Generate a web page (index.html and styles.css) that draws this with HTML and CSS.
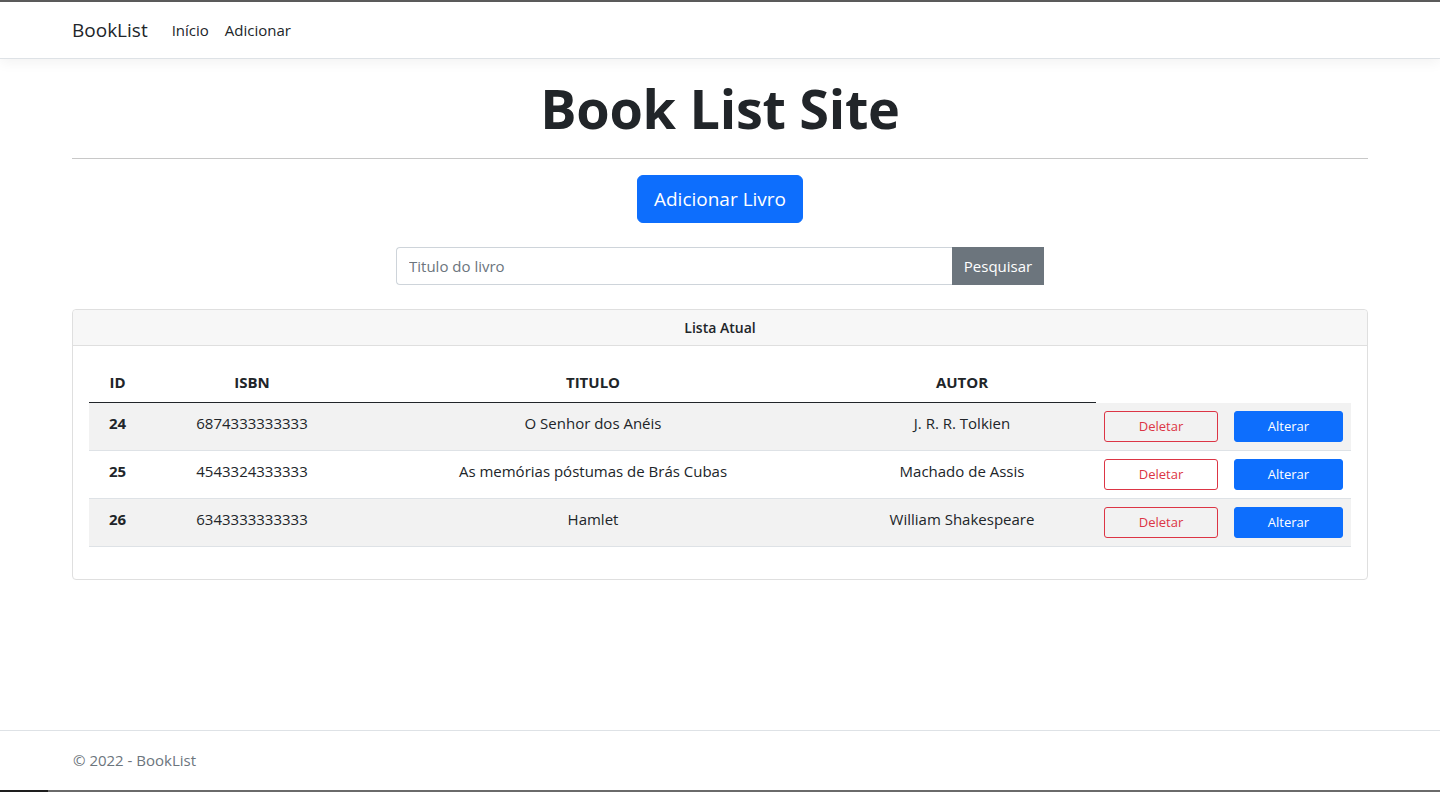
FILE: index.html
```html
<!DOCTYPE html>
<html lang="pt-br">
<head>
<meta charset="utf-8">
<title>BookList</title>
<link rel="stylesheet" href="styles.css">
</head>
<body>
<div class="frame-top"></div>
<header class="navbar">
  <div class="container nav-inner">
    <a class="brand" href="#">BookList</a>
    <nav class="nav-links">
      <a class="nav-link" href="#">Início</a>
      <a class="nav-link" href="#">Adicionar</a>
    </nav>
  </div>
</header>
<main class="container main">
  <h1 class="title">Book List Site</h1>
  <hr class="divider">
  <div class="actions">
    <a class="btn btn-primary btn-lg" href="#">Adicionar Livro</a>
  </div>
  <form class="search">
    <input class="search-input" type="text" placeholder="Titulo do livro">
    <button class="btn btn-secondary search-btn" type="button">Pesquisar</button>
  </form>
  <section class="card">
    <div class="card-header">Lista Atual</div>
    <div class="card-body">
      <table class="table">
        <colgroup>
          <col class="c-id"><col class="c-isbn"><col class="c-title"><col class="c-author"><col class="c-del"><col class="c-alt">
        </colgroup>
        <thead>
          <tr><th>ID</th><th>ISBN</th><th>TITULO</th><th>AUTOR</th></tr>
        </thead>
        <tbody>
          <tr class="odd">
            <th>24</th><td>6874333333333</td><td>O Senhor dos Anéis</td><td>J. R. R. Tolkien</td>
            <td><a class="btn btn-sm btn-outline-danger" href="#">Deletar</a></td>
            <td><a class="btn btn-sm btn-primary" href="#">Alterar</a></td>
          </tr>
          <tr>
            <th>25</th><td>4543324333333</td><td>As memórias póstumas de Brás Cubas</td><td>Machado de Assis</td>
            <td><a class="btn btn-sm btn-outline-danger" href="#">Deletar</a></td>
            <td><a class="btn btn-sm btn-primary" href="#">Alterar</a></td>
          </tr>
          <tr class="odd">
            <th>26</th><td>6343333333333</td><td>Hamlet</td><td>William Shakespeare</td>
            <td><a class="btn btn-sm btn-outline-danger" href="#">Deletar</a></td>
            <td><a class="btn btn-sm btn-primary" href="#">Alterar</a></td>
          </tr>
        </tbody>
      </table>
    </div>
  </section>
</main>
<footer class="footer">
  <div class="container">© 2022 - BookList</div>
</footer>
<div class="frame-bottom"></div>
</body>
</html>
```
FILE: styles.css
```css
* { box-sizing: border-box; }
html, body { margin: 0; padding: 0; }
body {
  font-family: "Open Sans", "Noto Sans", sans-serif;
  font-size: 16px;
  line-height: 1.5;
  color: #212529;
  background: #fff;
  height: 792px;
  display: flex;
  flex-direction: column;
  overflow: hidden;
}
a { text-decoration: none; }
.frame-top { height: 2px; background: #5c5c5c; flex: none; }
.frame-bottom { height: 2px; flex: none; background: linear-gradient(to right, #1e1e1e 48px, #6a6a6a 48px); }
.container { width: 1296px; margin: 0 auto; }

.navbar {
  flex: none;
  background: #fff;
  border-bottom: 1px solid #dee2e6;
  box-shadow: 0 4px 12px rgba(0,0,0,.05);
  padding: 8px 0;
  position: relative;
  z-index: 1;
}
.nav-inner { display: flex; align-items: center; }
.brand { font-size: 19px; color: #212529; padding: 5px 0; line-height: 30px; margin-right: 16px; }
.nav-links { display: flex; }
.nav-link { color: #212529; font-size: 15px; padding: 8px 8px; line-height: 24px; }

.main { flex: 1; padding-top: 16px; }
.title {
  margin: 0;
  text-align: center;
  font-size: 54px;
  line-height: 67px;
  font-weight: 700;
  letter-spacing: -0.3px;
}
.divider { margin: 16px 0; border: 0; border-top: 1px solid #c8c8c8; }
.actions { display: flex; justify-content: center; }

.btn {
  display: inline-block;
  text-align: center;
  border: 1px solid transparent;
  font-family: inherit;
  cursor: pointer;
}
.btn-primary { background: #0d6efd; border-color: #0d6efd; color: #fff; }
.btn-secondary { background: #6c757d; border-color: #6c757d; color: #fff; }
.btn-outline-danger { background: transparent; border-color: #dc3545; color: #dc3545; }
.btn-lg { font-size: 19px; line-height: 30px; padding: 8px 16px; border-radius: 6px; }
.btn-sm { font-size: 13px; line-height: 21px; padding: 4px 8px; border-radius: 3px; display: block; width: 100%; }

.search { display: flex; width: 648px; margin: 24px auto; }
.search-input {
  flex: 1;
  height: 38px;
  border: 1px solid #ced4da;
  border-right: 0;
  border-radius: 4px 0 0 4px;
  padding: 6px 12px;
  font-family: inherit;
  font-size: 15px;
  color: #212529;
  outline: none;
}
.search-input::placeholder { color: #6c757d; }
.search-btn { height: 38px; width: 92px; padding: 0; font-size: 15px; border-radius: 0; }

.card { border: 1px solid #dfdfdf; border-radius: 4px; }
.card-header {
  background: #f7f7f7;
  border-bottom: 1px solid #dfdfdf;
  text-align: center;
  font-weight: 600;
  font-size: 14px;
  line-height: 19px;
  padding: 8px 16px;
  border-radius: 4px 4px 0 0;
}
.card-body { padding: 16px; }
.table { width: 1262px; border-collapse: collapse; table-layout: fixed; margin-bottom: 16px; }
.c-id { width: 57px; }
.c-isbn { width: 212px; }
.c-title { width: 470px; }
.c-author { width: 268px; }
.c-del { width: 130px; }
.c-alt { width: 125px; }
.table th, .table td { text-align: center; vertical-align: top; font-size: 15px; }
.table thead th { padding: 8px; line-height: 24px; border-bottom: 1px solid #212529; font-weight: 700; }
.table tbody td, .table tbody th { padding: 8px; line-height: 24px; border-bottom: 1px solid #dee2e6; }
.table tbody th { font-weight: 700; }
.table tbody tr.odd { background: #f2f2f2; }

.footer {
  flex: none;
  border-top: 1px solid #dee2e6;
  line-height: 59px;
  height: 60px;
  color: #6c757d;
  font-size: 15px;
}
.footer .container { padding-left: 1px; }
```
